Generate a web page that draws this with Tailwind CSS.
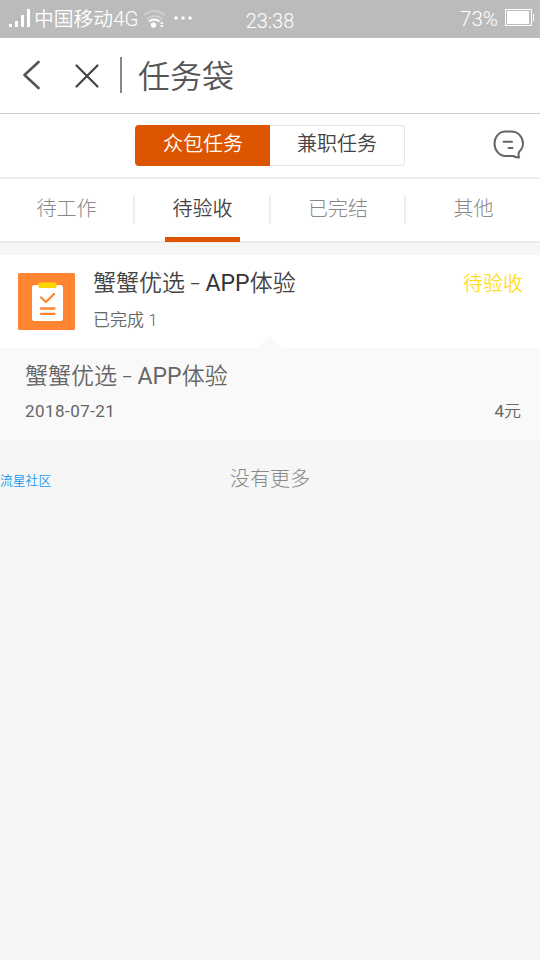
<!DOCTYPE html>
<html lang="zh-CN">
<head>
<meta charset="utf-8">
<meta name="viewport" content="width=device-width, initial-scale=1">
<title>任务袋</title>
<script src="https://cdn.jsdelivr.net/npm/@tailwindcss/browser@4"></script>
</head>
<body class="bg-[#f6f6f6] font-['Roboto','Noto_Sans_CJK_SC',sans-serif] font-light">
<div class="flex h-[960px] w-[540px] flex-col overflow-hidden whitespace-nowrap">
  <div class="grid h-[38px] shrink-0 grid-cols-3 bg-[#bbbbbb] text-[20px] leading-[36px] text-white">
    <div class="flex pl-[9px]">
      <svg class="mt-[9px] h-[18px] w-[22px] shrink-0" viewBox="0 0 22 18" fill="#fff"><path d="M0 15h3v3H0zM6 12h3v6H6zM12 6h3v12h-3zM18 0h3v18h-3z"/></svg>
      <span class="ml-[3px] pt-px text-[19.800px] font-[350]">中国移动<span class="text-[20.500px] font-light">4G</span></span>
      <svg class="mt-[9px] ml-[4px] h-[20px] w-[24px] shrink-0" viewBox="0 0 24 20" fill="none" stroke="#fff" stroke-width="2"><path d="M1 6q10-8 21 0M4 10q7.500-6 15 0" opacity=".3"/><path d="M6 12.500q5-4 10.500 0"/><circle cx="10.500" cy="16" r="2.700" fill="#fff" stroke="none"/><path d="m16.800 14.800 2-2.300 2 2.300zM16.800 16.200l2 2.300 2-2.300z" fill="#fff" stroke="none"/></svg>
      <svg class="mt-[16px] ml-[7px] h-[4px] w-[18px] shrink-0" viewBox="0 0 18 4" fill="#fff"><circle cx="2" cy="2" r="1.800"/><circle cx="9" cy="2" r="1.800"/><circle cx="16" cy="2" r="1.800"/></svg>
    </div>
    <div class="pt-[3px] text-center text-[20px]">23:38</div>
    <div class="flex justify-end pr-[6px]">
      <span class="mr-[7px] pt-px text-[20.500px]">73%</span>
      <svg class="mt-[9px] h-[17px] w-[29px]" viewBox="0 0 29 17"><rect x=".5" y=".5" width="26" height="16" fill="none" stroke="#fff"/><path d="M2 2h22v13H2zM28 5h1v7h-1z" fill="#fff"/></svg>
    </div>
  </div>

  <header class="flex h-[76px] shrink-0 items-center border-b border-[#cccccc] bg-white pl-[22px]">
    <svg class="mb-[2px] h-[30px] w-[18px]" viewBox="0 0 18 30" fill="none" stroke="#555" stroke-width="2.600" stroke-linecap="round" stroke-linejoin="round"><path d="M16.500 2 2.500 15l14 13"/></svg>
    <svg class="ml-[35px] h-[24px] w-[24px]" viewBox="0 0 24 24" fill="none" stroke="#444" stroke-width="2.200" stroke-linecap="round"><path d="m1.500 1.500 21 21m0-21-21 21"/></svg>
    <div class="mb-[2px] ml-[21px] h-[36px] w-[2px] bg-[#888]"></div>
    <h1 class="ml-[16px] pt-[2px] text-[32px] leading-[40px] font-[350] text-[#555]">任务袋</h1>
  </header>

  <div class="grid h-[65px] shrink-0 grid-cols-[135px_270px_135px] items-start border-b-2 border-[#eeeeee] bg-white">
    <div></div>
    <div class="mt-[11px] grid h-[41px] grid-cols-2 text-center text-[20px] leading-[39px]">
      <div class="rounded-l-[4px] bg-[#dd5500] pl-px font-[350] text-white">众包任务</div>
      <div class="rounded-r-[4px] border border-l-0 border-[#e5e5e5] leading-[37px] font-[350] text-[#444]">兼职任务</div>
    </div>
    <svg class="mt-[16px] mr-[16px] h-[30px] w-[31px] justify-self-end" viewBox="0 0 31 30" fill="none" stroke="#666" stroke-width="2" stroke-linecap="round" stroke-linejoin="round"><path d="M12.500 1.500h6C25 1.500 30 7 30 13.500c0 3.500-1.500 6-3.800 8.200-1 1.500-.8 3.500-.2 5.800-2 .3-4-.5-6-1.500h-7.500C6 26 1.500 20 1.500 13.500S6 1.500 12.500 1.500Z"/><path d="M10.500 11.800h8.500M15.500 18h4"/></svg>
  </div>

  <nav class="grid h-[64px] shrink-0 grid-cols-4 border-b-2 border-[#ebebeb] bg-white text-center text-[20px] leading-[60px] text-[#888]">
    <div class="flex items-start"><span class="flex-1">待工作</span><i class="mt-[17px] h-[28px] w-[2px] bg-[#eee]"></i></div>
    <div class="flex items-start text-[#444]"><span class="relative flex-1 pl-px font-[350]">待验收<i class="absolute top-[58px] left-[30px] h-[5px] w-[75px] bg-[#dd5500]"></i></span><i class="mt-[17px] -mr-px h-[28px] w-[2px] bg-[#eee]"></i></div>
    <div class="flex items-start"><span class="flex-1 pl-[2px]">已完结</span><i class="mt-[17px] -mr-px h-[28px] w-[2px] bg-[#eee]"></i></div>
    <div class="pl-[2px]">其他</div>
  </nav>

  <section class="relative mt-[12px] flex h-[93px] shrink-0 bg-white pr-[17px] pl-[18px]">
    <svg class="mt-[18px] h-[57px] w-[57px] shrink-0" viewBox="0 0 57 57"><rect width="57" height="57" rx="1.500" fill="#ff8533"/><rect x="14" y="12" width="31" height="36" rx="2.500" fill="#fff"/><rect x="20.500" y="9.500" width="18" height="5.500" rx="1.500" fill="#ffd500"/><g fill="none" stroke="#ff8533" stroke-width="2.300" stroke-linecap="round"><path d="m23 24.500 5 4.500 8-8"/><path d="M23 35.500h13.500M23 40.800h13.500"/></g></svg>
    <div class="ml-[18px] flex-1 pt-[15px]">
      <div class="text-[23px] leading-[28px] font-[350] text-[#444]">蟹蟹优选<span class="mx-[7px] inline-block scale-x-150 font-light">-</span><span class="font-normal text-[#333]">APP</span>体验</div>
      <div class="mt-[12px] text-[17px] leading-[20px] font-[350] text-[#666]">已完成 <span>1</span></div>
    </div>
    <div class="pt-[15px] text-[20px] leading-[28px] font-[350] text-[#ffdd22]">待验收</div>
    <svg class="absolute bottom-0 left-[258px] h-[12px] w-[24px]" viewBox="0 0 24 12"><path d="M0 12 12 0l12 12z" fill="#f9f9f9"/></svg>
  </section>

  <section class="h-[93px] shrink-0 bg-[#f9f9f9] pt-[15px] pr-[19px] pl-[25px] text-[#666]">
    <div class="text-[23px] leading-[28px] font-[350]">蟹蟹优选<span class="mx-[7px] inline-block scale-x-150 font-light">-</span><span class="font-normal">APP</span>体验</div>
    <div class="mt-[10px] flex justify-between text-[17px] leading-[20px]"><span class="font-normal tracking-[0.450px]">2018-07-21</span><span class="font-[350]"><span class="font-normal">4</span>元</span></div>
  </section>

  <footer class="grid h-[74px] shrink-0 grid-cols-3 items-center text-[20px] text-[#888]">
    <div class="pt-[5px] text-[12.800px] font-[350] text-[#2299ee]">流星社区</div>
    <div class="pt-[2px] text-center">没有更多</div>
  </footer>
</div>
</body>
</html>
